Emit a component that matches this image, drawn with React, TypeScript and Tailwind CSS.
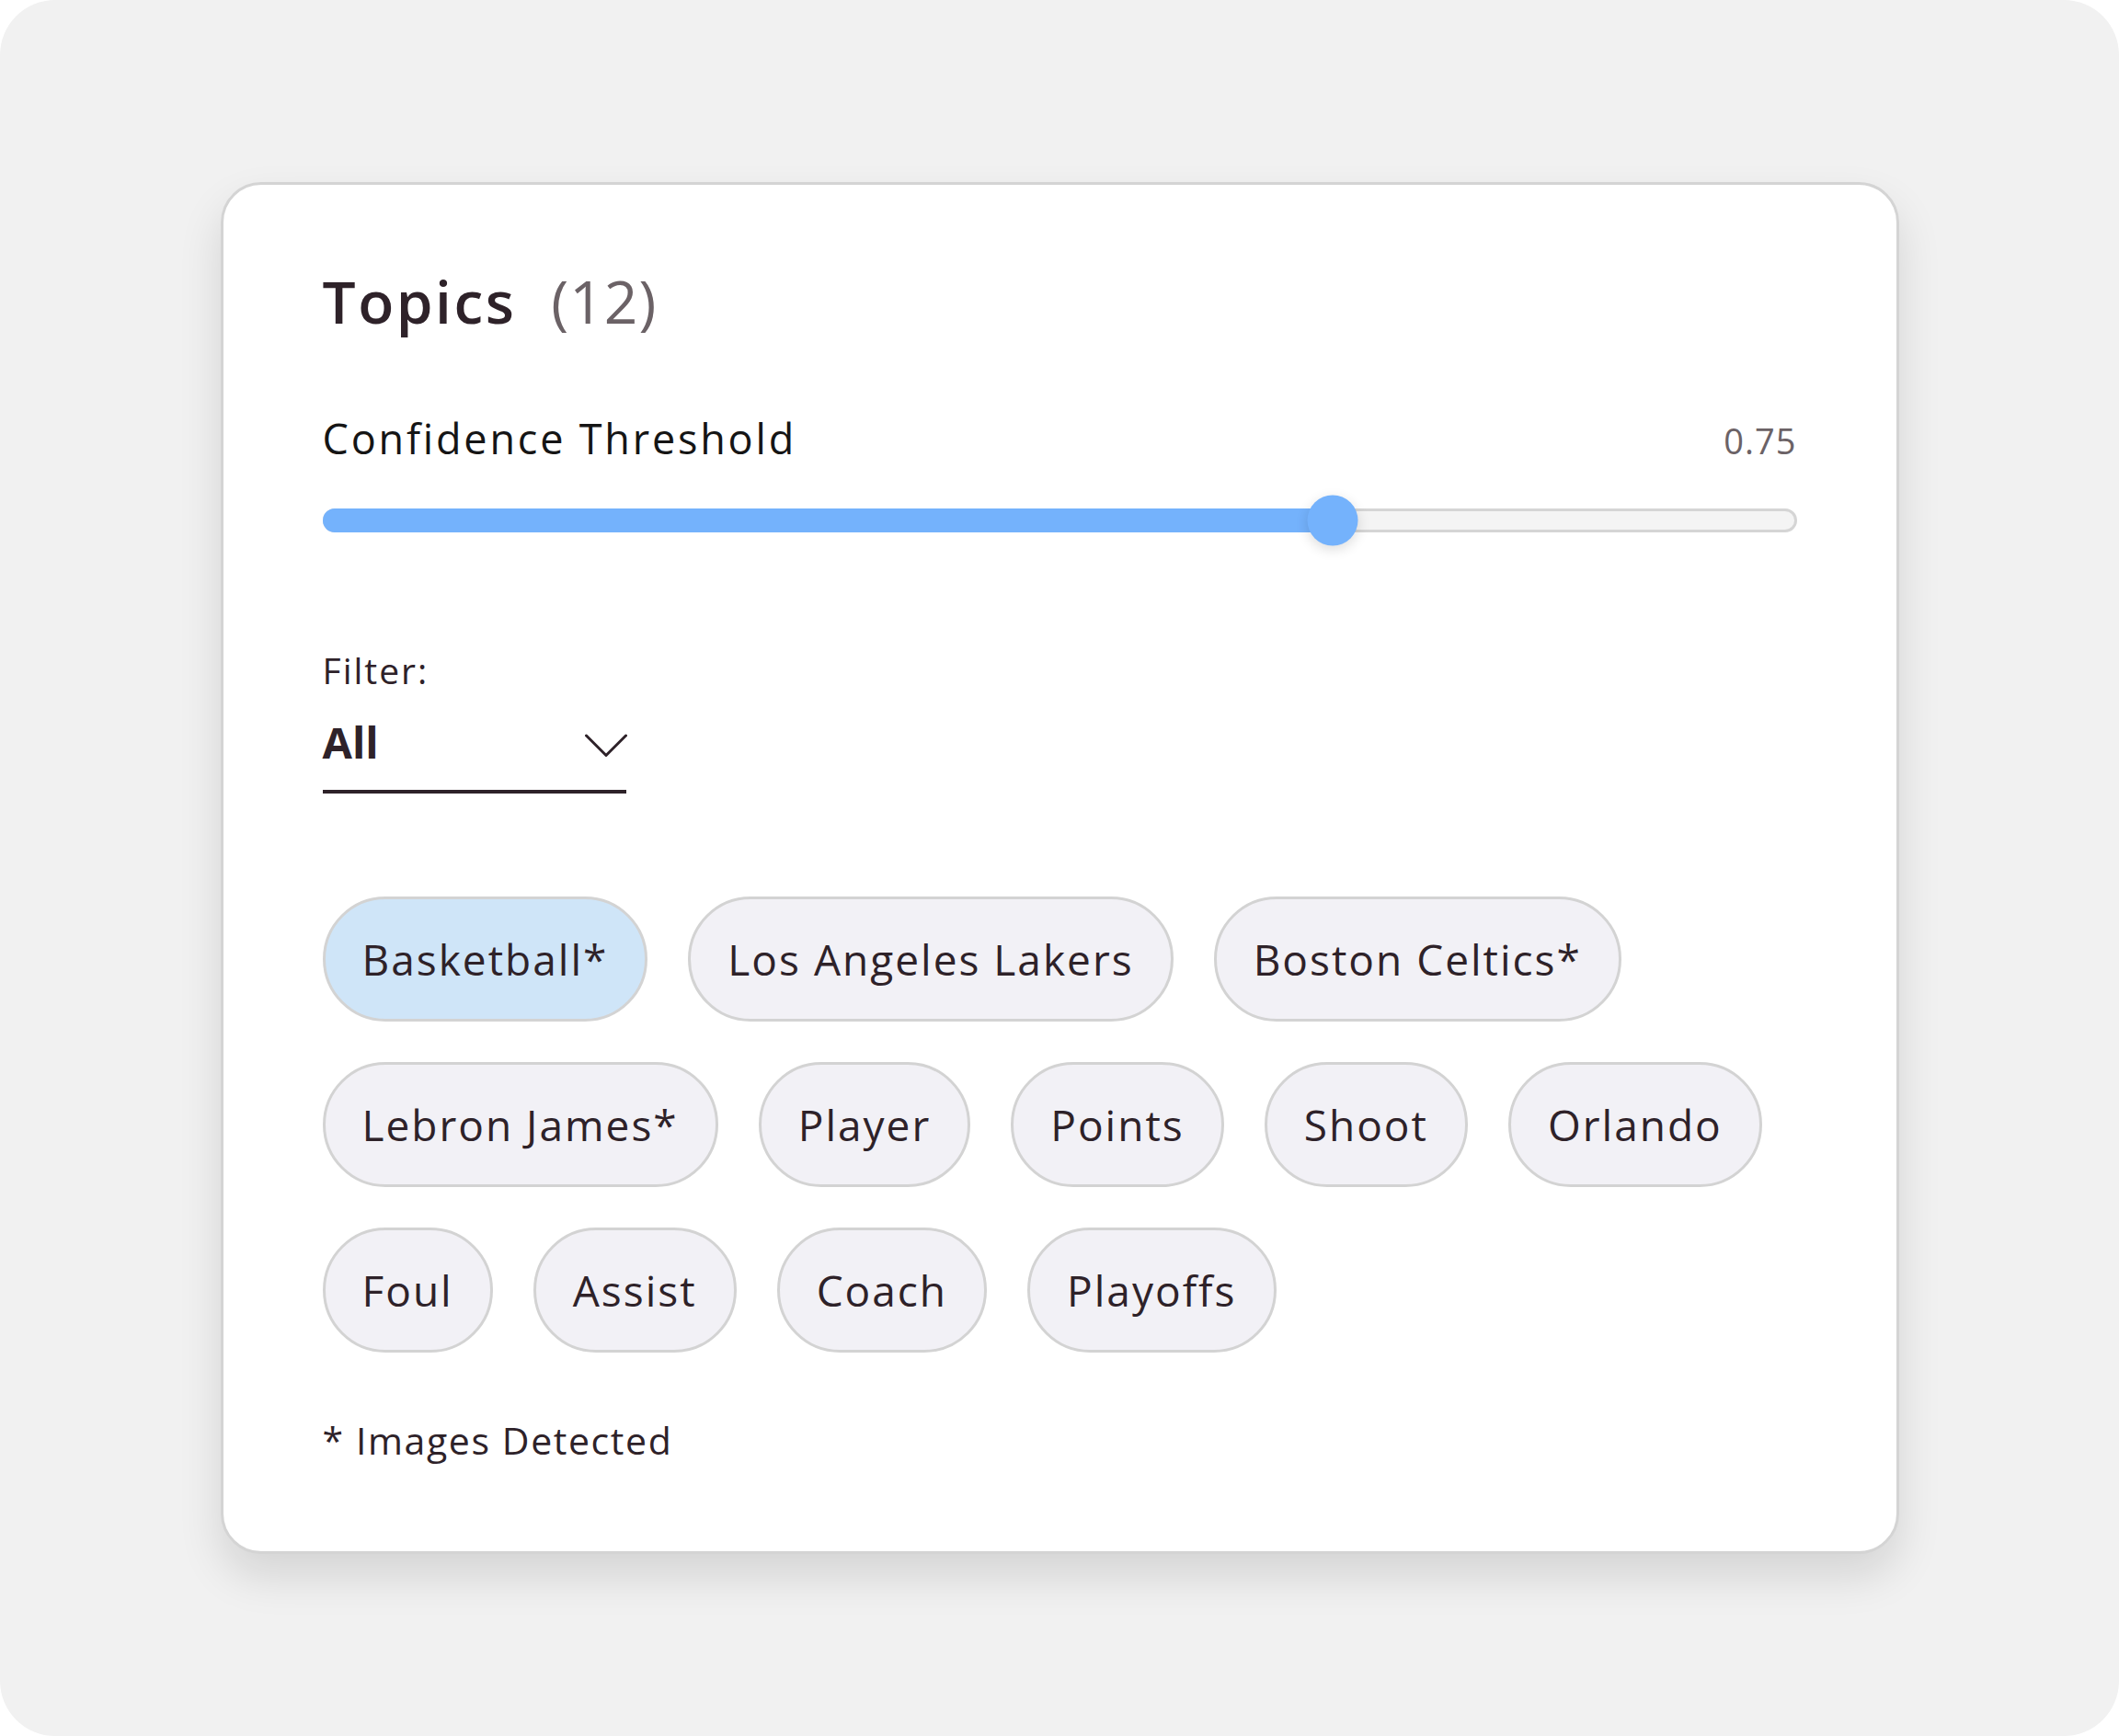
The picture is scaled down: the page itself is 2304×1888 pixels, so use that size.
type Topic = { label: string; selected?: boolean };

const rows: Topic[][] = [
  [{ label: "Basketball*", selected: true }, { label: "Los Angeles Lakers" }, { label: "Boston Celtics*" }],
  [
    { label: "Lebron James*" },
    { label: "Player" },
    { label: "Points" },
    { label: "Shoot" },
    { label: "Orlando" },
  ],
  [{ label: "Foul" }, { label: "Assist" }, { label: "Coach" }, { label: "Playoffs" }],
];

const threshold = 0.686;

function TopicChip({ label, selected }: Topic) {
  return (
    <div
      className={`flex h-[136px] items-center rounded-full border-[3px] border-[#d3d3d3] px-[40px] text-[46px] leading-none tracking-[2px] text-[#2e2229] ${
        selected ? "bg-[#cfe5f8]" : "bg-[#f2f1f6]"
      }`}
    >
      {label}
    </div>
  );
}

export default function App() {
  return (
    <div className="h-[1888px] w-[2304px] bg-white" style={{ fontFamily: '"Open Sans", sans-serif' }}>
      <div className="flex h-full w-full items-center justify-center rounded-[60px] bg-[#f1f1f1]">
        <div className="flex h-[1492px] w-[1825px] flex-col rounded-[44px] border-[3px] border-[#d4d4d4] bg-white px-[108px] pt-[95px] shadow-[0_24px_48px_rgba(0,0,0,0.12)]">
          <div className="flex items-baseline gap-[38px] leading-none">
            <span className="text-[64px] font-semibold tracking-[2.5px] text-[#2e2229]">Topics</span>
            <span className="text-[64px] tracking-[1px] text-[#6b6266]">(12)</span>
          </div>

          <div className="mt-[94px] flex items-baseline justify-between leading-none">
            <span className="text-[45px] tracking-[2.8px] text-[#151515]">Confidence Threshold</span>
            <span className="text-[38px] tracking-[1px] text-[#6b6266]">0.75</span>
          </div>

          <div className="mt-[39px] flex h-[55px] items-center">
            <div className="relative h-[26px] w-full rounded-full border-[3px] border-[#d5d5d5] bg-[#f4f4f4]">
              <div
                className="absolute -top-[3px] -bottom-[3px] -left-[3px] rounded-full bg-[#74b2fc]"
                style={{ width: `${threshold * 100}%` }}
              />
              <div
                className="absolute top-1/2 h-[55px] w-[55px] -translate-x-1/2 -translate-y-1/2 rounded-full bg-[#74b2fc] shadow-[0_4px_14px_rgba(0,0,0,0.14)]"
                style={{ left: `${threshold * 100}%` }}
              />
            </div>
          </div>

          <div className="mt-[116px] text-[39px] leading-none tracking-[2px] text-[#2e2229]">Filter:</div>
          <div className="mt-[36px] flex w-[330px] items-center justify-between border-b-[4px] border-[#2e2229] pb-[28px]">
            <span className="text-[47px] font-bold leading-none text-[#2e2229]">All</span>
            <svg width="46" height="26" viewBox="0 0 46 26" fill="none" className="mr-[-1px] mt-[6px]">
              <path d="M1.5 2 L23 23.5 L44.5 2" stroke="#2e2229" strokeWidth="3" strokeLinecap="round" strokeLinejoin="round" />
            </svg>
          </div>

          <div className="mt-[112px] flex flex-col gap-[44px]">
            {rows.map((row, i) => (
              <div key={i} className="flex gap-[44px]">
                {row.map((t) => (
                  <TopicChip key={t.label} {...t} />
                ))}
              </div>
            ))}
          </div>

          <div className="mt-[75px] text-[41px] leading-none tracking-[1.6px] text-[#2e2229]">* Images Detected</div>
        </div>
      </div>
    </div>
  );
}
